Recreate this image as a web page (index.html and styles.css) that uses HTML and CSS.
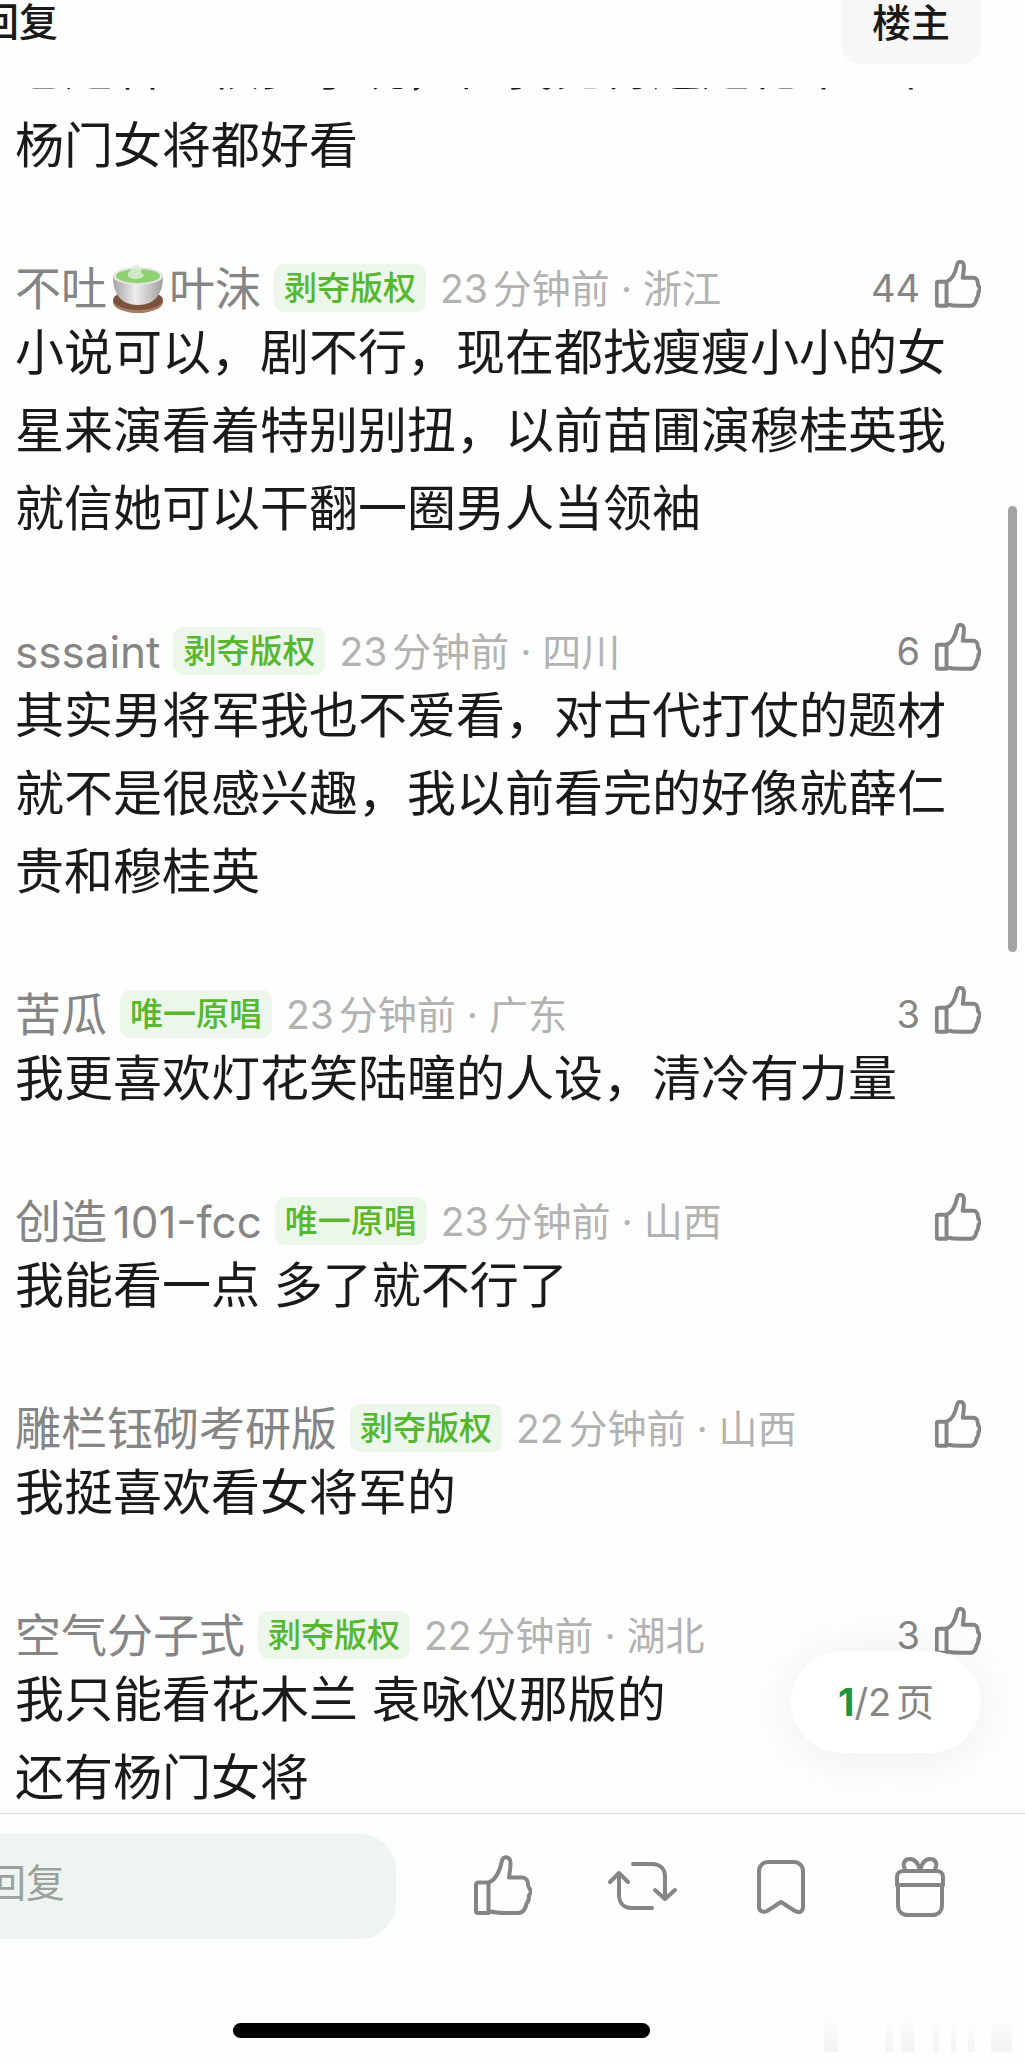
FILE: index.html
```html
<!DOCTYPE html>
<html lang="zh-CN">
<head>
<meta charset="utf-8">
<meta name="viewport" content="width=device-width, initial-scale=1">
<title>回复</title>
<link rel="stylesheet" href="styles.css">
</head>
<body>
<svg class="defs" aria-hidden="true">
  <symbol id="thumb" viewBox="0 0 58 62">
    <path d="M4 27.500h10.500V58H4a2 2 0 0 1-2-2V29.500a2 2 0 0 1 2-2zM14.500 27.500C22 25 26 15 28 5.500C29 .5 37 1 36.500 9C36.500 14 35.500 18 35 22.500H48c4 0 6 3 6 6.500c0 2 0 3 1.500 4.500c2 2 1.500 5-.5 6.500c0 4 0 6-2.500 8.500c-.5 4-3 9.500-8 9.500H32c-6 0-12-.5-17.500-2"/>
  </symbol>
</svg>
<div class="app">
  <header class="topbar">
    <h1 class="topbar-title">回复</h1>
    <button class="owner" type="button">楼主</button>
  </header>

  <main class="feed">
    <div class="list">
      <article class="comment">
        <p class="text">也是看过很多小说，但我觉得还是花木兰和<br>杨门女将都好看</p>
      </article>

      <article class="comment">
        <div class="head">
          <span class="name">不吐<svg class="tea" viewBox="0 0 52 52" role="img" aria-label="茶"><defs><linearGradient id="cup" x1="0" x2="1"><stop offset="0" stop-color="#a5a3a2"/><stop offset=".45" stop-color="#efeded"/><stop offset="1" stop-color="#a09e9d"/></linearGradient></defs><ellipse cx="26" cy="40" rx="25" ry="11" fill="#a87c64"/><ellipse cx="26" cy="38" rx="25" ry="10" fill="#7d523c"/><path d="M1 14c0 18 8 29 25 29s25-11 25-29z" fill="url(#cup)"/><ellipse cx="26" cy="14" rx="25" ry="9" fill="#e6e6e2"/><ellipse cx="26" cy="14" rx="22" ry="7" fill="#8fd072"/><path d="M16 14c-2-5 4-4 3-8c3-5 8-4 9 0c4 1-2 4 3 6c4 5-13 7-15 2z" fill="#dfeeda" opacity=".8"/></svg>叶沫</span>
          <span class="tag">剥夺版权</span>
          <span class="meta">23分钟前 · 浙江</span>
          <button class="like" type="button" aria-label="赞">44<svg class="icon"><use href="#thumb"/></svg></button>
        </div>
        <p class="text">小说可以，剧不行，现在都找瘦瘦小小的女星来演看着特别别扭，以前苗圃演穆桂英我就信她可以干翻一圈男人当领袖</p>
      </article>

      <article class="comment">
        <div class="head">
          <span class="name"><span><span class="latin">sssaint</span></span></span>
          <span class="tag">剥夺版权</span>
          <span class="meta">23分钟前 · 四川</span>
          <button class="like" type="button" aria-label="赞">6<svg class="icon"><use href="#thumb"/></svg></button>
        </div>
        <p class="text">其实男将军我也不爱看，对古代打仗的题材就不是很感兴趣，我以前看完的好像就薛仁贵和穆桂英</p>
      </article>

      <article class="comment">
        <div class="head">
          <span class="name">苦瓜</span>
          <span class="tag">唯一原唱</span>
          <span class="meta">23分钟前 · 广东</span>
          <button class="like" type="button" aria-label="赞">3<svg class="icon"><use href="#thumb"/></svg></button>
        </div>
        <p class="text">我更喜欢灯花笑陆曈的人设，清冷有力量</p>
      </article>

      <article class="comment">
        <div class="head">
          <span class="name"><span>创造<span class="latin">101-fcc</span></span></span>
          <span class="tag">唯一原唱</span>
          <span class="meta">23分钟前 · 山西</span>
          <button class="like" type="button" aria-label="赞"><svg class="icon"><use href="#thumb"/></svg></button>
        </div>
        <p class="text">我能看一点 多了就不行了</p>
      </article>

      <article class="comment">
        <div class="head">
          <span class="name">雕栏钰砌考研版</span>
          <span class="tag">剥夺版权</span>
          <span class="meta">22分钟前 · 山西</span>
          <button class="like" type="button" aria-label="赞"><svg class="icon"><use href="#thumb"/></svg></button>
        </div>
        <p class="text">我挺喜欢看女将军的</p>
      </article>

      <article class="comment">
        <div class="head">
          <span class="name">空气分子式</span>
          <span class="tag">剥夺版权</span>
          <span class="meta">22分钟前 · 湖北</span>
          <button class="like" type="button" aria-label="赞">3<svg class="icon"><use href="#thumb"/></svg></button>
        </div>
        <p class="text">我只能看花木兰 袁咏仪那版的<br>还有杨门女将</p>
      </article>
    </div>
    <div class="scroll-thumb"></div>
    <button class="pager" type="button"><span class="pager-now">1</span>/2页</button>
  </main>

  <footer class="bottom">
    <div class="bar">
      <input class="reply" type="text" placeholder="回复" aria-label="回复">
      <nav class="actions">
        <button class="action" type="button" aria-label="赞"><svg class="glyph" viewBox="0 0 72 64"><use href="#thumb" x="7" y="0" width="58" height="62"/></svg></button>
        <button class="action" type="button" aria-label="转发"><svg class="glyph" viewBox="0 0 72 64"><path d="M27 9h19c8 0 13 5 13 13v22M49 35l10 9l10-9M46 53H26c-8 0-13-5-13-13V19M4 27l9-9l9 9"/></svg></button>
        <button class="action" type="button" aria-label="收藏"><svg class="glyph" viewBox="0 0 72 64"><path d="M23 7h26c5 0 9 4 9 9v36c0 5-4 6-8 4L36 47L22 56c-4 2-8 0-8-4V16c0-5 4-9 9-9z"/></svg></button>
        <button class="action" type="button" aria-label="礼物"><svg class="glyph" viewBox="0 0 72 64"><path d="M19 16h34c4 0 6 3 6 6v8H13v-8c0-3 2-6 6-6zM14 30v20c0 6 4 10 10 10h24c6 0 10-4 10-10V30M22 16c-5-8-1-12 4-12c5 0 9 5 10 12c1-7 5-12 10-12c5 0 9 4 4 12"/></svg></button>
      </nav>
    </div>
    <div class="home"></div>
    <svg class="mark" viewBox="0 0 200 36" aria-hidden="true">
      <defs><linearGradient id="fade" x1="0" y1="0" x2="0" y2="1"><stop offset="0" stop-color="#fefefe"/><stop offset="1" stop-color="#f3f3f3"/></linearGradient></defs>
      <path fill="url(#fade)" d="M4 0h14v36H4zM66 0h7v36h-7zM81 0h13v36H81zM113 8h6v28h-6zM131 8h5v28h-5zM148 0h7v36h-7zM171 6h21v30h-21z"/>
    </svg>
  </footer>
</div>
</body>
</html>
```
FILE: styles.css
```css
* { box-sizing: border-box; }

body {
  margin: 0;
  background: #fefefe;
  color: #1a1a1a;
  font-family: Inter, "Noto Sans CJK SC", sans-serif;
  text-autospace: normal;
}

button {
  margin: 0;
  padding: 0;
  border: 0;
  background: none;
  color: inherit;
  font: inherit;
}

.defs {
  position: absolute;
  width: 0;
  height: 0;
}

.app {
  display: flex;
  flex-direction: column;
  height: 100vh;
  overflow: hidden;
}

.topbar {
  display: flex;
  flex: none;
  justify-content: space-between;
  height: 88px;
  padding-right: 44px;
  overflow: hidden;
  font-size: 39px;
  font-weight: 500;
}

.topbar-title {
  margin: -20px 0 0 -20px;
  font-size: 39px;
  font-weight: 500;
  line-height: 84px;
}

.owner {
  height: 84px;
  margin-top: -20px;
  padding: 0 31px 4px;
  border-radius: 20px;
  background: #f7f7f7;
}

.feed {
  position: relative;
  flex: 1;
  min-height: 0;
  overflow: hidden;
}

/* The list is scrolled part of the way through its first comment. */
.list {
  margin-top: -59px;
  padding: 0 44px 0 15px;
}

.comment { padding-bottom: 76px; }

.text {
  margin: 0;
  font-size: 49px;
  line-height: 78px;
}

.head {
  display: flex;
  align-items: center;
  height: 53px;
  color: #858585;
  white-space: nowrap;
}

.name {
  display: flex;
  align-items: center;
  padding-bottom: 6px;
  font-family: "Noto Sans CJK SC", sans-serif;
  font-size: 46px;
}

.latin {
  font-family: Inter, sans-serif;
  font-size: 44px;
}

.tea {
  width: 52px;
  height: 52px;
  margin: 6px 5px 0;
}

.tag {
  margin: 0 14px 0 13px;
  padding: 0 10px;
  border-radius: 10px;
  background: #edf6ea;
  color: #55b82f;
  font-size: 33px;
  font-weight: 500;
  line-height: 48px;
}

.meta {
  padding-bottom: 4px;
  color: #b2b2b2;
  font-size: 39px;
}

.like {
  display: flex;
  align-items: center;
  gap: 15px;
  margin-left: auto;
  font-size: 38px;
}

.icon {
  width: 46px;
  height: 49px;
  margin-bottom: 6px;
  stroke-width: 5;
}

.icon, .glyph {
  overflow: visible;
  fill: none;
  stroke: #858585;
  stroke-linecap: round;
  stroke-linejoin: round;
}

.glyph {
  width: 72px;
  height: 64px;
  stroke-width: 4;
}

.scroll-thumb {
  position: absolute;
  top: 418px;
  right: 8px;
  width: 9px;
  height: 446px;
  border-radius: 5px;
  background: #a3a3a3;
}

.pager {
  position: absolute;
  right: 44px;
  bottom: 60px;
  height: 102px;
  padding: 0 47px 6px;
  border-radius: 51px;
  background: #fff;
  box-shadow: 0 4px 56px rgba(0, 0, 0, 0.07);
  color: #858585;
  font-size: 38px;
}

.pager-now {
  color: #1f9540;
  font-weight: 700;
}

.bottom {
  position: relative;
  flex: none;
  height: 249px;
  border-top: 1px solid #dcdcdc;
}

/* The reply box runs off the left edge of the window. */
.bar {
  display: grid;
  grid-template-columns: 436fr 555fr;
  column-gap: 38px;
  align-items: center;
  margin: 20px 36px 0 -40px;
}

.reply {
  width: 100%;
  height: 105px;
  padding: 0 0 8px 27px;
  border: 0;
  border-radius: 36px;
  background: #eef5f1;
  font: inherit;
  font-size: 39px;
}

.reply::placeholder { color: #9aa09c; }

.actions { display: flex; }

.action {
  display: flex;
  flex: 1;
  justify-content: center;
}

.home {
  width: 417px;
  height: 15px;
  margin: 84px auto 0 233px;
  border-radius: 8px;
  background: #000;
}

.mark {
  position: absolute;
  right: 5px;
  bottom: 10px;
  width: 200px;
  height: 36px;
}
```
